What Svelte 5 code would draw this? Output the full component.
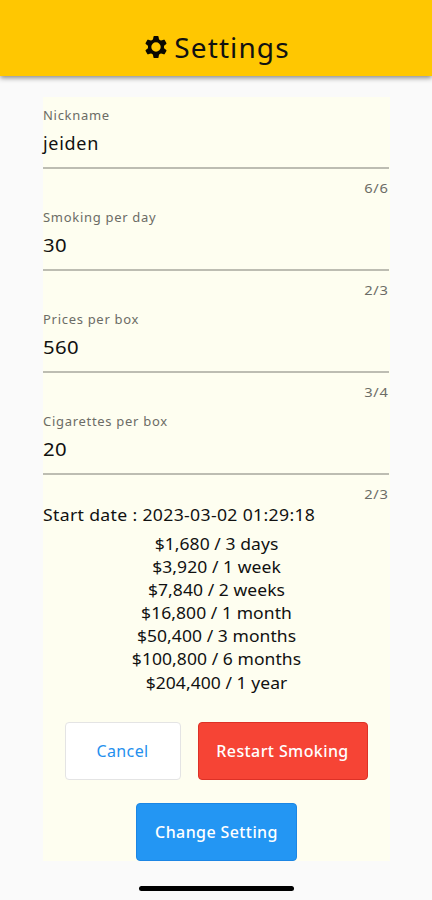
<script>
  const fields = [
    { label: 'Nickname', value: 'jeiden', count: '6/6' },
    { label: 'Smoking per day', value: '30', count: '2/3' },
    { label: 'Prices per box', value: '560', count: '3/4' },
    { label: 'Cigarettes per box', value: '20', count: '2/3' }
  ];
  const savings = [
    '$1,680 / 3 days',
    '$3,920 / 1 week',
    '$7,840 / 2 weeks',
    '$16,800 / 1 month',
    '$50,400 / 3 months',
    '$100,800 / 6 months',
    '$204,400 / 1 year'
  ];
  const teeth = [0, 60, 120, 180, 240, 300];
</script>

<div class="screen">
  <header>
    <svg class="gear" viewBox="-11 -11 22 22" aria-hidden="true">
      <circle r="6.4" fill="none" stroke="#0a0800" stroke-width="3.4" />
      {#each teeth as angle}
        <path d="M-3.2-6.8L-2.5-10.4Q-2.3-11-1.7-11H1.7Q2.3-11 2.5-10.4L3.2-6.8Z" fill="#0a0800" transform="rotate({angle})" />
      {/each}
    </svg>
    <h1>Settings</h1>
  </header>

  <main>
    {#each fields as field}
      <div class="field">
        <div class="label">{field.label}</div>
        <div class="value"><span class:numeric={/^\d+$/.test(field.value)}>{field.value}</span></div>
        <div class="count"><span>{field.count}</span></div>
      </div>
    {/each}

    <div class="start">Start date : 2023-03-02 01:29:18</div>
    <div class="savings">
      {#each savings as line}
        <div>{line}</div>
      {/each}
    </div>

    <div class="actions">
      <button class="cancel">Cancel</button>
      <button class="restart">Restart Smoking</button>
    </div>
    <button class="change">Change Setting</button>
  </main>

  <div class="home"></div>
</div>

<style>
  :global(body) {
    margin: 0;
    background: #fafafa;
  }
  .screen {
    box-sizing: border-box;
    width: 432px;
    height: 900px;
    overflow: hidden;
    background: #fafafa;
    color: #111;
    font-family: 'Noto Sans', sans-serif;
  }
  header {
    box-sizing: border-box;
    height: 76px;
    padding: 17px 0 0 3px;
    display: flex;
    align-items: center;
    justify-content: center;
    gap: 7px;
    background: #ffc701;
    box-shadow: 0 2px 5px rgba(0, 0, 0, 0.45);
  }
  .gear {
    width: 22px;
    height: 22px;
  }
  h1 {
    margin: 0;
    font-size: 28px;
    line-height: 36px;
    font-weight: 400;
    letter-spacing: 1.1px;
  }
  main {
    box-sizing: border-box;
    width: 347px;
    height: 764px;
    margin: 21px 0 0 43px;
    background: #fefef0;
  }
  .field {
    height: 101.9px;
  }
  .label {
    padding-top: 8px;
    font-size: 13px;
    line-height: 20px;
    color: #6c6c66;
    letter-spacing: 0.7px;
  }
  .value {
    box-sizing: border-box;
    height: 44px;
    padding-top: 6px;
    width: 346px;
    border-bottom: 2px solid #bdbdb2;
    font-size: 18px;
    line-height: 24px;
    letter-spacing: 0.7px;
  }
  .value span,
  .count span {
    display: inline-block;
  }
  .value .numeric {
    letter-spacing: 0.3px;
    transform: scaleX(1.13);
    transform-origin: left;
  }
  .count {
    padding: 9px 1px 0 0;
    font-size: 13px;
    line-height: 20px;
    color: #6c6c66;
    text-align: right;
    letter-spacing: 0.7px;
  }
  .count span {
    transform: scaleX(1.13);
    transform-origin: right;
  }
  .start {
    font-size: 16px;
    line-height: 20px;
    letter-spacing: 0.3px;
    white-space: nowrap;
    transform: scaleX(1.102);
    transform-origin: left;
  }
  .savings {
    margin-top: 8px;
    font-size: 16px;
    line-height: 23.15px;
    letter-spacing: 0.05px;
    text-align: center;
    transform: scaleX(1.094);
  }
  .actions {
    display: flex;
    justify-content: center;
    gap: 17px;
    margin-top: 27px;
    padding-right: 1px;
  }
  button {
    box-sizing: border-box;
    height: 58px;
    padding: 0;
    border-radius: 4px;
    font-family: inherit;
    font-size: 16px;
    font-weight: 500;
    letter-spacing: 0.4px;
    color: #fff;
  }
  .cancel {
    width: 116px;
    border: 1px solid #e4e4e4;
    background: #fff;
    color: #2590ee;
    font-weight: 400;
  }
  .restart {
    width: 170px;
    border: 1px solid #dd3126;
    background: #f64435;
  }
  .change {
    display: block;
    width: 161px;
    margin: 23px 0 0 93px;
    border: 1px solid #1c86e4;
    background: #2396f3;
  }
  .home {
    width: 155px;
    height: 5px;
    margin: 25px auto 0;
    border-radius: 3px;
    background: #000;
  }
</style>
